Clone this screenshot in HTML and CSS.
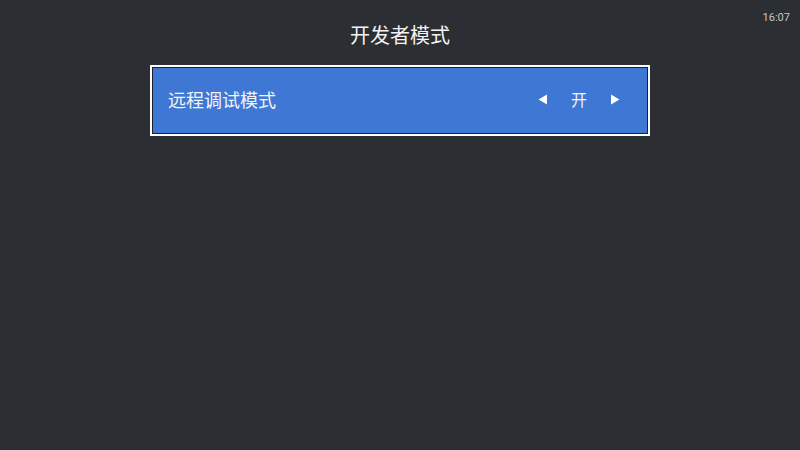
FILE: index.html
```html
<!DOCTYPE html>
<html lang="zh-CN">
<head>
<meta charset="utf-8">
<title>开发者模式</title>
<link rel="stylesheet" href="styles.css">
</head>
<body>
<div class="screen">
  <div class="clock">16:07</div>
  <header class="title">开发者模式</header>
  <div class="item">
    <div class="item-inner">
      <span class="item-label">远程调试模式</span>
      <div class="switcher">
        <svg class="arrow" width="9" height="11" viewBox="0 0 9 11"><polygon points="9,0.5 9,10.5 0.5,5.5" fill="#ffffff"/></svg>
        <span class="value">开</span>
        <svg class="arrow" width="9" height="11" viewBox="0 0 9 11"><polygon points="0,0.5 0,10.5 8.5,5.5" fill="#ffffff"/></svg>
      </div>
    </div>
  </div>
</div>
</body>
</html>
```

FILE: styles.css
```css
html, body {
  margin: 0;
  padding: 0;
  background: #2b2e33;
}
body {
  font-family: "Noto Sans CJK SC", Roboto, "Noto Sans", sans-serif;
  color: #f4f4f4;
}
.screen {
  position: relative;
  width: 800px;
  height: 450px;
  overflow: hidden;
  display: flex;
  flex-direction: column;
  align-items: center;
}
.clock {
  position: absolute;
  top: 10px;
  right: 10px;
  font-family: Roboto, "Noto Sans", sans-serif;
  font-size: 11px;
  line-height: 16px;
  color: #c4c6c9;
}
.title {
  margin-top: 21px;
  font-size: 20px;
  line-height: 28px;
  height: 28px;
}
.item {
  margin-top: 16px;
  width: 496px;
  border: 2px solid #ffffff;
}
.item-inner {
  border: 1px solid #1e2125;
  background: #3f77d4;
  height: 65px;
  box-sizing: border-box;
  height: 67px;
  display: flex;
  align-items: center;
  justify-content: space-between;
  padding: 0 27px 3px 15px;
}
.item-label {
  font-size: 18px;
  line-height: 24px;
}
.switcher {
  display: flex;
  align-items: center;
  gap: 24px;
}
.value {
  font-size: 16px;
  line-height: 24px;
}
.arrow {
  display: block;
}
```
